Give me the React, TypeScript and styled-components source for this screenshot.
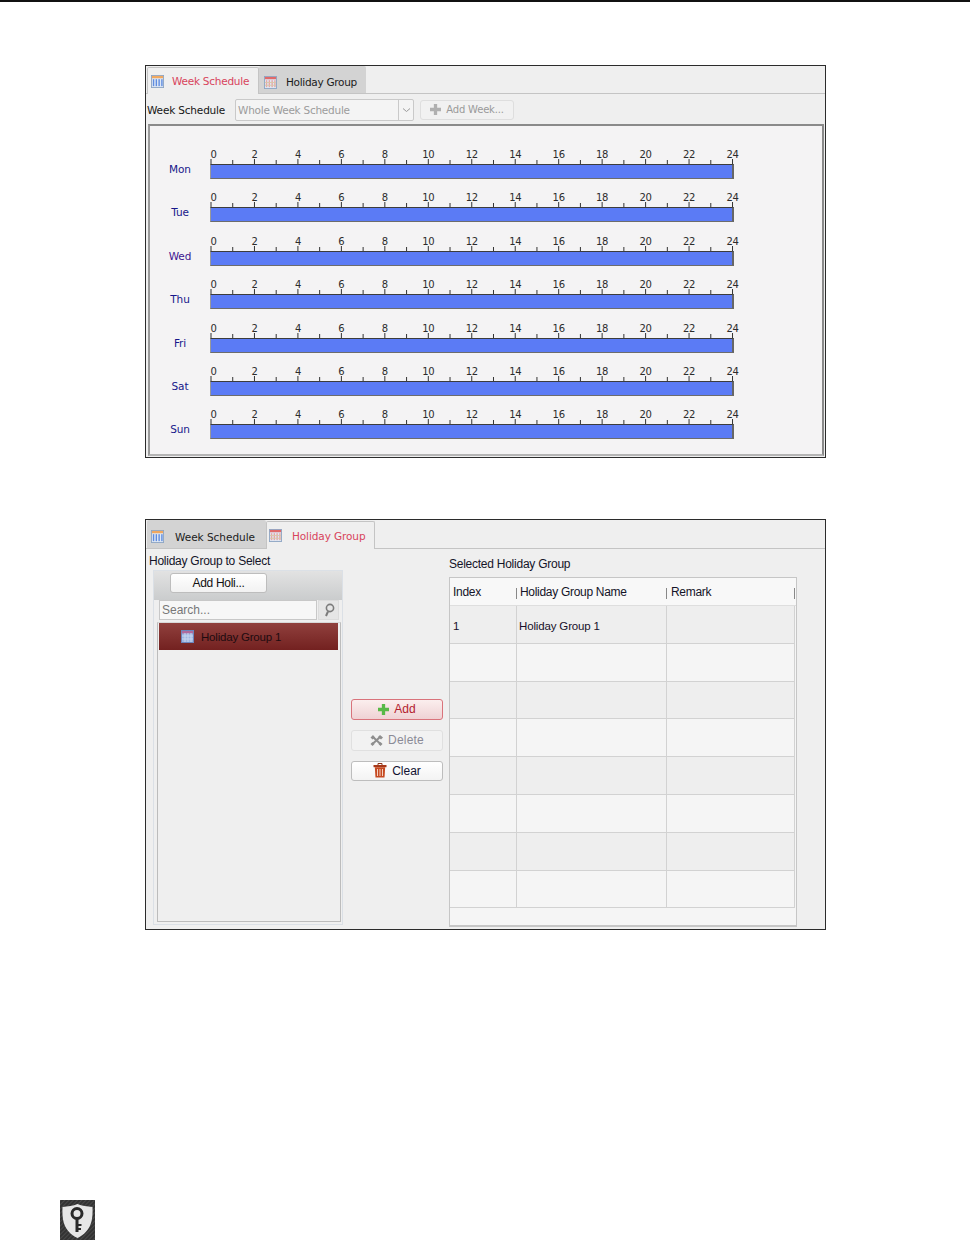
import React from "react";
import styled, { createGlobalStyle } from "styled-components";

const Global = createGlobalStyle`
  html, body { margin: 0; padding: 0; background: #fff; }
  * { box-sizing: border-box; }
`;

const uiFont = `"DejaVu Sans", "Liberation Sans", sans-serif`;
const tableFont = `"Liberation Sans", Arial, sans-serif`;

const Page = styled.div`
  width: 970px;
  height: 1240px;
  overflow: hidden;
  background: #fff;
  border-top: 2px solid #111;
  display: flex;
  flex-direction: column;
  font-family: ${uiFont};
`;

const Panel = styled.section<{ $top: number; $height: number }>`
  margin: ${(p) => p.$top}px 0 0 145px;
  width: 681px;
  height: ${(p) => p.$height}px;
  flex: none;
  border: 1px solid #2b2b2b;
  background: #efefef;
  display: flex;
  flex-direction: column;
`;

const TabBar = styled.div<{ $height: number }>`
  height: ${(p) => p.$height}px;
  flex: none;
  display: flex;
  padding-left: 1px;
  border-bottom: 1px solid #c4c4c4;
`;

const Tab = styled.div<{ $active?: boolean; $width: number; $pad: number; $gap: number; $track: number }>`
  width: ${(p) => p.$width}px;
  margin: ${(p) => (p.$active ? "1px 0 -1px" : "0")};
  display: flex;
  align-items: center;
  gap: ${(p) => p.$gap}px;
  padding-left: ${(p) => p.$pad}px;
  padding-top: ${(p) => (p.$active ? 0 : 5)}px;
  white-space: nowrap;
  font-size: 10.5px;
  letter-spacing: ${(p) => p.$track}px;
  color: ${(p) => (p.$active ? "#d8445c" : "#1b1b1b")};
  background: ${(p) => (p.$active ? "#efefef" : "#d3d3d3")};
  border: ${(p) => (p.$active ? "1px solid #c4c4c4" : "none")};
  border-bottom: none;
  border-radius: 2px 2px 0 0;
`;

const Toolbar = styled.div`
  height: 30px;
  flex: none;
  display: flex;
  align-items: center;
  padding: 2px 0 0 1px;
`;

const ToolLabel = styled.span`
  width: 88px;
  font-size: 10.5px;
  letter-spacing: -0.17px;
  color: #161616;
`;

const Combo = styled.div`
  width: 179px;
  height: 22px;
  display: flex;
  border: 1px solid #c9c9c9;
  border-radius: 2px;
  background: #f4f4f4;
`;

const ComboText = styled.span`
  flex: 1;
  padding-left: 2px;
  line-height: 20px;
  font-size: 10.5px;
  letter-spacing: -0.25px;
  color: #9c9c9c;
`;

const ComboArrow = styled.span`
  width: 15px;
  border-left: 1px solid #c9c9c9;
  display: flex;
  align-items: center;
  justify-content: center;
`;

const GhostButton = styled.div`
  margin: -1px 0 0 6px;
  width: 94px;
  height: 20px;
  border: 1px solid #dedede;
  border-radius: 3px;
  background: #f1f1f1;
  display: flex;
  align-items: center;
  justify-content: center;
  gap: 5px;
  font-size: 10px;
  letter-spacing: -0.2px;
  color: #9a9a9a;
`;

const ScheduleFrame = styled.div`
  margin: 0 1px 0 2px;
  height: 332px;
  border: 2px solid #8a8a8a;
  border-bottom-color: #b4b4b4;
  border-left-color: #9a9a9a;
  background: #f4f3f4;
  padding: 23px 0 0 10px;
  display: flex;
  flex-direction: column;
`;

const DayRow = styled.div`
  height: 43.4px;
  flex: none;
  display: flex;
`;

const DayLabel = styled.span<{ $purple?: boolean }>`
  width: 40px;
  padding-top: 14px;
  text-align: center;
  font-size: 10.5px;
  line-height: 13px;
  letter-spacing: -0.1px;
  color: ${(p) => (p.$purple ? "#3d1590" : "#17178a")};
`;

const DayTrack = styled.div`
  width: 524px;
  margin-left: 10px;
  display: flex;
  flex-direction: column;
`;

const RulerSvg = styled.svg`
  display: block;
  width: 532px;
  height: 15px;
  overflow: visible;
`;

const RulerText = styled.text`
  font-family: ${uiFont};
  font-size: 10px;
  letter-spacing: -0.3px;
  fill: #2c2c2c;
  text-anchor: middle;
`;

const Bar = styled.div`
  height: 15px;
  background: #5b7bf5;
  border-top: 1px solid #3c3c3c;
  border-bottom: 1px solid #6c6c6c;
  border-left: 1px solid #999;
  border-right: 2px solid #666;
`;

const HolidayBody = styled.div`
  flex: 1;
  display: flex;
  min-height: 0;
`;

const LeftColumn = styled.div`
  width: 197px;
  flex: none;
  padding: 4px 0 0 3px;
  display: flex;
  flex-direction: column;
`;

const SectionLabel = styled.span`
  font-family: ${tableFont};
  font-size: 12px;
  line-height: 16px;
  letter-spacing: -0.25px;
  color: #141428;
`;

const SelectBox = styled.div`
  margin: 1px 0 0 4px;
  width: 190px;
  height: 355px;
  border: 1px solid #dbe0e6;
  display: flex;
  flex-direction: column;
  padding: 0 1px 2px;
`;

const BoxHeader = styled.div`
  height: 29px;
  flex: none;
  margin: 0 -1px;
  padding: 2px 0 0 16px;
  background: linear-gradient(#e2e2e2, #cacccd);
`;

const PlainButton = styled.div`
  width: 97px;
  height: 20px;
  border: 1px solid #bdbdbd;
  border-radius: 3px;
  background: linear-gradient(#fff, #f2f2f2);
  text-align: center;
  font-family: ${tableFont};
  font-size: 12px;
  line-height: 19px;
  letter-spacing: -0.3px;
  color: #111;
`;

const SearchRow = styled.div`
  height: 21px;
  flex: none;
  display: flex;
  padding-left: 4px;
`;

const SearchInput = styled.div`
  width: 158px;
  height: 20px;
  border: 1px solid #c8c8c8;
  background: #f7f7f7;
  padding-left: 2px;
  font-family: ${tableFont};
  font-size: 12px;
  line-height: 18px;
  color: #777;
`;

const SearchButton = styled.div`
  width: 21px;
  height: 20px;
  margin-left: 1px;
  border: 1px solid #dcdcdc;
  background: #e6e6e6;
  display: flex;
  align-items: center;
  justify-content: center;
`;

const TreeList = styled.div`
  margin: 1px 0 0 2px;
  flex: 1;
  border: 1px solid #bcbcbc;
  border-top-color: #d8d8d8;
  padding: 0 2px 0 1px;
`;

const TreeItem = styled.div`
  height: 27px;
  display: flex;
  align-items: center;
  gap: 7px;
  padding-left: 22px;
  background: linear-gradient(#90403d, #732120);
  font-family: ${tableFont};
  font-size: 11.5px;
  letter-spacing: -0.2px;
  color: #1d0b10;
`;

const MiddleColumn = styled.div`
  width: 92px;
  flex: none;
  margin-left: 8px;
  padding-top: 150px;
  display: flex;
  flex-direction: column;
`;

const ActionButton = styled.div<{ $tone: "red" | "ghost" | "plain"; $height: number; $gap: number }>`
  height: ${(p) => p.$height}px;
  margin-bottom: ${(p) => p.$gap}px;
  padding-bottom: 1px;
  flex: none;
  display: flex;
  align-items: center;
  justify-content: center;
  gap: 5px;
  border-radius: 3px;
  font-family: ${tableFont};
  font-size: 12px;
  letter-spacing: ${(p) => (p.$tone === "ghost" ? "0.2px" : "0")};
  border: 1px solid
    ${(p) => (p.$tone === "red" ? "#d9737b" : p.$tone === "ghost" ? "#e0e0e0" : "#bdbdbd")};
  background: ${(p) =>
    p.$tone === "red"
      ? "linear-gradient(#fbeeee, #efd2d4)"
      : p.$tone === "ghost"
        ? "#f2f2f2"
        : "linear-gradient(#fff, #f3f3f3)"};
  color: ${(p) => (p.$tone === "red" ? "#b3202e" : p.$tone === "ghost" ? "#8a8a96" : "#101030")};
`;

const RightColumn = styled.div`
  width: 348px;
  flex: none;
  margin-left: 6px;
  padding-top: 7px;
  display: flex;
  flex-direction: column;
`;

const TableWrap = styled.div`
  margin-top: 5px;
  height: 350px;
  border: 1px solid #c6c6c6;
  border-bottom-width: 2px;
  background: #f5f5f5;
  display: flex;
  flex-direction: column;
`;

const columns = "67px 150px 128px";

const HeadRow = styled.div`
  height: 28px;
  flex: none;
  display: grid;
  grid-template-columns: ${columns};
  background: #f8f8f8;
  border-bottom: 1px solid #dedede;
`;

const HeadCell = styled.div<{ $pad: number }>`
  position: relative;
  padding-left: ${(p) => p.$pad}px;
  font-family: ${tableFont};
  font-size: 12px;
  line-height: 28px;
  letter-spacing: -0.3px;
  color: #141428;
  &::after {
    content: "";
    position: absolute;
    right: 0;
    top: 10px;
    height: 11px;
    width: 1px;
    background: #888;
  }
`;

const BodyRow = styled.div<{ $odd: boolean }>`
  height: 37.8px;
  flex: none;
  display: grid;
  grid-template-columns: ${columns};
  width: 345px;
  background: ${(p) => (p.$odd ? "#eeeeee" : "#f5f5f5")};
  border-bottom: 1px solid #d2d2d2;
`;

const BodyCell = styled.div<{ $pad: number }>`
  padding-left: ${(p) => p.$pad}px;
  border-right: 1px solid #d2d2d2;
  font-family: ${tableFont};
  font-size: 11.5px;
  line-height: 40px;
  letter-spacing: -0.15px;
  color: #18102a;
`;

const ShieldWrap = styled.div`
  margin: 270px 0 0 60px;
  width: 35px;
  height: 40px;
  flex: none;
`;

const ruler = Array.from({ length: 25 }, (_, i) => i);
const tickX = (i: number) => 1 + i * 21.73;

const Ruler = () => (
  <RulerSvg viewBox="0 0 532 15">
    {ruler
      .filter((i) => i % 2 === 0)
      .map((i) => (
        <RulerText key={i} x={tickX(i) + (i === 0 ? 2.5 : 0)} y={9}>
          {i}
        </RulerText>
      ))}
    {ruler.map((i) => (
      <line
        key={i}
        x1={tickX(i)}
        x2={tickX(i)}
        y1={i % 2 === 0 ? 10 : 11}
        y2={15}
        stroke="#333"
        strokeWidth={1}
      />
    ))}
  </RulerSvg>
);

const CalendarIcon = ({ tone }: { tone: "week" | "holiday" }) => {
  const head = tone === "week" ? "#f0a860" : "#e06a6a";
  const cell = tone === "week" ? "#5f8ce0" : "#e8a5a5";
  return (
    <svg width="13" height="13" viewBox="0 0 14 14">
      <rect x="0.5" y="0.5" width="13" height="13" fill="#dfe8f4" stroke="#8ea6c4" />
      <rect x="1" y="1" width="12" height="2.5" fill={head} />
      {[2, 5, 8, 11].map((x) => (
        <rect key={x} x={x} y="4.5" width="1.5" height="7.5" fill={cell} />
      ))}
      {tone === "holiday" && <path d="M1 7h12M1 10h12" stroke="#d8c8a8" />}
    </svg>
  );
};

const SelectedIcon = () => (
  <svg width="13" height="13" viewBox="0 0 13 13">
    <rect x="0.5" y="0.5" width="12" height="12" fill="#9fb6e0" stroke="#6c86bd" />
    <rect x="1" y="1" width="11" height="2.5" fill="#b06a9c" />
    <path d="M1 6h11M1 9h11M4 3v9M7 3v9M10 3v9" stroke="#c8d6ee" />
  </svg>
);

const ChevronIcon = () => (
  <svg width="9" height="6" viewBox="0 0 9 6">
    <path d="M1 1.5l3.5 3 3.5-3" fill="none" stroke="#9a9a9a" />
  </svg>
);

const PlusIcon = ({ color, size }: { color: string; size: number }) => (
  <svg width={size} height={size} viewBox="0 0 12 12">
    <path d="M4.2 0h3.6v4.2H12v3.6H7.8V12H4.2V7.8H0V4.2h4.2z" fill={color} />
  </svg>
);

const ToolsIcon = () => (
  <svg width="13" height="11" viewBox="0 0 13 11">
    <path d="M3 2l8 7.500M10 2l-8 7.500" stroke="#8f8f8f" strokeWidth="2" />
    <path d="M0.500 2.500L3 0l2 2.500-2.500 2zM10 0l3 2.500-2 2-3-2.500zM0.500 9l2-2 2 2-2 2zM8.500 9l2-2 2 2-2 2z" fill="#8f8f8f" />
  </svg>
);

const TrashIcon = () => (
  <svg width="14" height="15" viewBox="0 0 14 15">
    <path d="M5 0.500h4v2H5z" fill="none" stroke="#8c3418" />
    <rect x="0.500" y="2" width="13" height="2.200" fill="#a8391a" />
    <path d="M1.800 4.200h10.400l-.7 10.300H2.500z" fill="#c64a22" />
    <path d="M4.500 6v7M7 6v7M9.500 6v7" stroke="#f4d0c0" strokeWidth="1" />
  </svg>
);

const SearchIcon = () => (
  <svg width="12" height="14" viewBox="0 0 12 14">
    <circle cx="7" cy="5" r="3.6" fill="none" stroke="#7c7c7c" strokeWidth="1.6" />
    <path d="M5 8.500L3 13" stroke="#7c7c7c" strokeWidth="2" />
  </svg>
);

const ShieldIcon = () => (
  <svg width="35" height="40" viewBox="0 0 35 40">
    <defs>
      <pattern id="hatch" width="3" height="3" patternUnits="userSpaceOnUse" patternTransform="rotate(45)">
        <rect width="3" height="3" fill="#333" />
        <rect width="1" height="3" fill="#4a4a4a" />
      </pattern>
    </defs>
    <rect width="35" height="40" fill="url(#hatch)" />
    <path
      d="M17.500 4C13 6 8 6.500 2.500 7c-.5 13 1 24 15 31C31.500 31 33 20 32.500 7c-5.500-.5-10.500-1-15-3z"
      fill="#e6e6e6"
    />
    <circle cx="17" cy="13.500" r="5" fill="none" stroke="#2a2a2a" strokeWidth="3" />
    <path d="M17 18v14" fill="none" stroke="#2a2a2a" strokeWidth="3" />
    <path d="M17 25h4.500M17 29h4" fill="none" stroke="#2a2a2a" strokeWidth="2" />
  </svg>
);

const days = ["Mon", "Tue", "Wed", "Thu", "Fri", "Sat", "Sun"];
const rows = Array.from({ length: 8 }, (_, i) => i);

export default function App() {
  return (
    <Page>
      <Global />
      <Panel $top={63} $height={393}>
        <TabBar $height={28}>
          <Tab $active $width={112} $pad={3} $gap={8} $track={-0.25}>
            <CalendarIcon tone="week" />
            Week Schedule
          </Tab>
          <Tab $width={107} $pad={5} $gap={9} $track={-0.3}>
            <CalendarIcon tone="holiday" />
            Holiday Group
          </Tab>
        </TabBar>
        <Toolbar>
          <ToolLabel>Week Schedule</ToolLabel>
          <Combo>
            <ComboText>Whole Week Schedule</ComboText>
            <ComboArrow>
              <ChevronIcon />
            </ComboArrow>
          </Combo>
          <GhostButton>
            <PlusIcon color="#b0b0b0" size={11} />
            Add Week...
          </GhostButton>
        </Toolbar>
        <ScheduleFrame>
          {days.map((d) => (
            <DayRow key={d}>
              <DayLabel $purple={d === "Wed"}>{d}</DayLabel>
              <DayTrack>
                <Ruler />
                <Bar />
              </DayTrack>
            </DayRow>
          ))}
        </ScheduleFrame>
      </Panel>

      <Panel $top={61} $height={411}>
        <TabBar $height={29}>
          <Tab $width={119} $pad={4} $gap={11} $track={-0.03}>
            <CalendarIcon tone="week" />
            Week Schedule
          </Tab>
          <Tab $active $width={109} $pad={2} $gap={10} $track={-0.1}>
            <CalendarIcon tone="holiday" />
            Holiday Group
          </Tab>
        </TabBar>
        <HolidayBody>
          <LeftColumn>
            <SectionLabel>Holiday Group to Select</SectionLabel>
            <SelectBox>
              <BoxHeader>
                <PlainButton>Add Holi...</PlainButton>
              </BoxHeader>
              <SearchRow>
                <SearchInput>Search...</SearchInput>
                <SearchButton>
                  <SearchIcon />
                </SearchButton>
              </SearchRow>
              <TreeList>
                <TreeItem>
                  <SelectedIcon />
                  Holiday Group 1
                </TreeItem>
              </TreeList>
            </SelectBox>
          </LeftColumn>
          <MiddleColumn>
            <ActionButton $tone="red" $height={21} $gap={10}>
              <PlusIcon color="#58b947" size={11} />
              Add
            </ActionButton>
            <ActionButton $tone="ghost" $height={21} $gap={10}>
              <ToolsIcon />
              Delete
            </ActionButton>
            <ActionButton $tone="plain" $height={20} $gap={0}>
              <TrashIcon />
              Clear
            </ActionButton>
          </MiddleColumn>
          <RightColumn>
            <SectionLabel>Selected Holiday Group</SectionLabel>
            <TableWrap>
              <HeadRow>
                <HeadCell $pad={3}>Index</HeadCell>
                <HeadCell $pad={3}>Holiday Group Name</HeadCell>
                <HeadCell $pad={4}>Remark</HeadCell>
              </HeadRow>
              {rows.map((i) => (
                <BodyRow key={i} $odd={i % 2 === 0}>
                  <BodyCell $pad={3}>{i === 0 ? "1" : ""}</BodyCell>
                  <BodyCell $pad={2}>{i === 0 ? "Holiday Group 1" : ""}</BodyCell>
                  <BodyCell $pad={2} />
                </BodyRow>
              ))}
            </TableWrap>
          </RightColumn>
        </HolidayBody>
      </Panel>

      <ShieldWrap>
        <ShieldIcon />
      </ShieldWrap>
    </Page>
  );
}
